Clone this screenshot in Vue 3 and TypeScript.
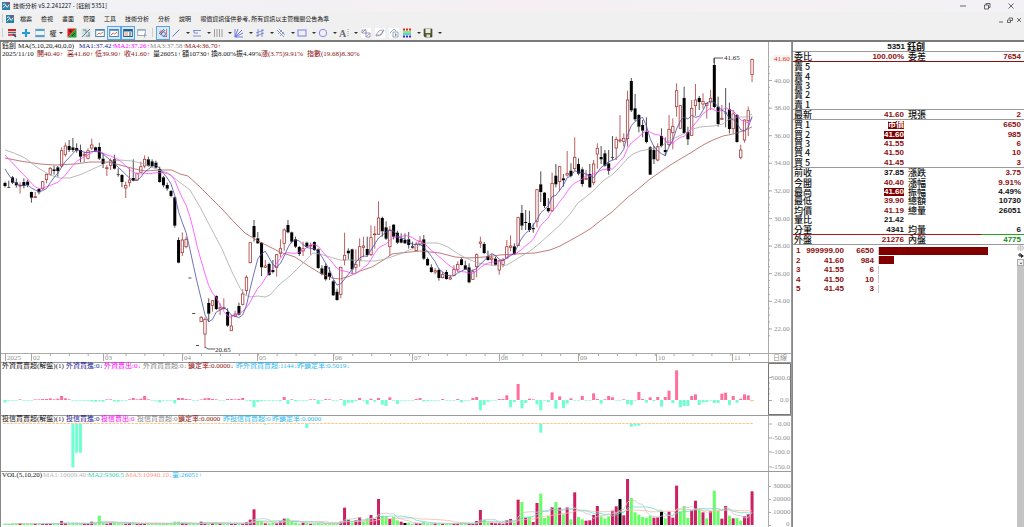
<script setup lang="ts">
type Kind = 'k' | 'r'
interface Candle { x: number; kind: Kind; high: number; top: number; bottom: number; low: number }

const STEP = 3.773
const FIRST = 5
const xAt = (i: number): number => FIRST + STEP * i

// each entry: kind, high, body top, body bottom, low, in thirds of a unit below the segment base
const segments: { base: number; rows: string }[] = [
  {
    base: 120,
    rows: `k 185 189 198 202,k 182 201 203 203,k 168 172 188 192,k 175 187 196 203,r 187 196 198 221,k 175 186 198 205,
k 179 185 195 202,k 215 216 233 248,r 216 230 233 233,k 205 207 217 223,r 183 185 206 210,r 161 163 179 190,
r 141 145 163 166,k 137 148 153 164,k 138 142 153 170,r 82 92 138 143,r 68 78 104 110,k 60 78 90 96,k 54 82 90 96,
k 70 84 92 98,k 74 90 110 127,r 95 103 106 126,r 85 92 115 118,r 56 75 84 90,k 80 82 94 95,k 68 81 116 120,
k 100 116 132 144,r 135 143 146 168,r 115 122 136 150,k 104 118 146 148,k 145 163 165 170,k 162 165 186 202,
r 185 196 204 234,r 145 180 188 200,k 118 174 182 184,r 158 160 180 182,r 125 140 157 158,r 106 118 138 145,
k 110 118 138 140,k 118 124 138 140,k 122 128 143 146,k 140 147 186 188,k 168 172 196 202,k 188 195 206 212,
k 210 213 228 232,k 230 232 317 323,k 352 360 428 430,r 337 360 398 408,r 350 358 380 385,k 473 473 475 475,
k 579 579 581 581,k 675 675 677 677,r 588 592 605 606,r 592 598 642 684,k 535 549 581 605,r 540 542 556 575,
k 526 528 567 570,r 550 563 567 585,r 535 563 566 568,k 565 576 617 620,r 585 618 632 633,r 572 582 588 592,
k 548 558 584 586,r 508 522 553 556,r 466 472 512 524,r 366 368 428 430,k 300 318 352 365`,
  },
  {
    base: 180,
    rows: `k 156 175 190 192,k 186 188 262 288,r 240 258 262 264,k 248 252 285 287,k 240 270 276 280,r 222 224 262 290,
r 178 206 220 232,r 145 150 190 212,k 120 135 157 160,k 155 157 185 190,k 170 178 200 204,k 198 201 222 228,
r 185 206 213 228,k 185 188 200 202,r 188 196 198 224,k 184 186 210 212,k 205 208 264 266,k 256 265 282 286,
k 250 258 298 302,k 262 278 291 300,k 300 304 346 348,k 326 335 360 362,r 260 262 343 355,r 158 226 240 256,
k 205 212 220 238,k 206 208 268 282,r 208 254 262 278,r 175 200 240 260,r 170 198 202 232,k 170 207 225 230,
r 136 173 224 228,r 138 162 164 206,r 64 114 163 165,k 110 114 154 170,k 124 142 176 180,r 138 150 200 228,
k 132 134 170 178,k 152 158 188 192,k 160 176 188 190,k 160 180 190 192,k 156 178 195 206,k 185 199 203 205,
r 185 192 212 213,r 168 184 192 194,k 165 178 236 240,k 232 237 256 258,k 253 262 276 278,r 264 272 276 283,
k 265 270 294 302,r 275 284 293 295,k 270 276 297 299,r 284 293 297 300,r 256 268 286 288,r 244 253 268 276,
k 234 238 255 256,k 242 256 268 270,k 250 262 307 310,r 268 275 298 300,r 220 224 260 292,r 170 186 190 204,
k 186 192 219 222,k 212 228 240 242,r 222 234 238 256,k 230 236 254 257,r 240 242 270 284,r 234 240 253 262`,
  },
  {
    base: 50,
    rows: `r 570 590 624 625,r 556 588 592 604,k 580 589 613 615,r 500 503 587 588,k 465 489 527 540,k 480 516 519 540,
k 482 519 540 546,k 520 534 538 548,r 417 419 514 532,k 364 403 426 456,k 426 428 468 474,k 444 474 484 488,
r 368 400 482 486,k 342 377 403 412,r 348 350 395 424,k 372 385 391 410,r 303 370 375 380,k 340 362 378 382,
r 262 322 356 362,k 325 342 371 376,k 352 358 402 410,r 360 385 388 390,k 342 372 412 414,r 330 342 398 405,
r 280 295 312 356,k 288 321 328 342,k 300 310 347 350,k 300 340 362 374,k 258 321 323 330,r 260 268 294 330,
r 195 270 273 278,r 250 265 274 290,r 122 150 266 290,k 84 93 181 186,k 132 175 208 214,k 192 195 230 247,
k 210 225 242 262,k 202 246 276 280,k 288 292 374 375,k 288 300 328 342,r 280 290 330 334,k 235 258 288 292,
k 262 300 306 318,r 195 238 284 290,r 205 229 248 298,r 100 122 170 200,r 165 167 235 237,k 110 144 249 252,
k 230 246 268 285,r 150 175 256 258,r 102 150 167 198,k 138 144 156 180,r 130 154 162 176,r 158 160 166 206,
r 120 145 156 180,k 24 45 171 175,k 140 170 222 230,r 165 205 208 210,k 114 188 190 232,k 158 178 237 250,
r 180 192 236 250,k 192 195 276 278,r 284 300 322 328,r 208 210 270 278,r 170 182 212 258,r 26 28 74 96`,
  },
]

const candles: Candle[] = segments
  .flatMap((s) => s.rows.split(',').map((row) => {
    const [kind, ...v] = row.trim().split(' ')
    const [high, top, bottom, low] = v.map((n) => s.base + Number(n) / 3)
    return { kind: kind as Kind, high, top, bottom, low }
  }))
  .map((c, i) => ({ ...c, x: xAt(i) }))

const average = (values: number[], n: number, seed: number[] = []): (number | null)[] =>
  values.map((_, i) => {
    if (i < n - 1) return seed[i] ?? null
    return values.slice(i - n + 1, i + 1).reduce((a, b) => a + b, 0) / n
  })
const polyline = (ys: (number | null)[]): string =>
  ys.map((y, i) => (y === null ? '' : `${xAt(i).toFixed(1)},${y.toFixed(1)}`)).filter(Boolean).join(' ')

const closes = candles.map((c) => (c.kind === 'k' ? c.bottom : c.top))
const ma5 = polyline(average(closes, 5, [169, 175, 180, 184]))
const ma10 = polyline(average(closes, 10, [155, 159, 163, 167, 171, 175, 179, 183, 187]))
const ma20 = '5,150 14,153 25,158 38,168 50,175 60,178 70,178 82,174 95,168 108,162 120,160 132,161 145,164 158,170 168,173 178,181 190,190 200,207 212,230 222,249 232,272 240,288 245,295 250,297 258,296 265,297 270,295 280,284 290,276 300,266 313,253 320,254 330,257 340,260 352,260 365,261 375,261 385,259 400,254 412,249 425,243 438,243 448,247 460,255 468,259 478,263 490,265 500,266 507,265 520,257 530,251 540,243 550,234 560,225 570,214 578,203 587,196 593,191 603,181 613,174 620,167 627,159 633,154 640,151 650,149 660,147 667,142 677,137 687,132 693,129 700,127 713,126 723,124 728,120 737,117 747,117 752,114'
const ma40 = '5,158 20,161 40,164 55,165 75,164 90,162 108,162 120,165 135,169 145,171 160,170 172,170 180,174 188,176 200,187 210,197 222,209 235,223 245,233 253,238 260,242 270,247 280,252 295,257 310,267 320,273 332,278 340,279 350,276 360,271 372,267 385,259 392,254 400,253 420,251 440,253 455,257 468,258 485,257 500,255 515,254 535,253 550,250 560,246 580,235 590,229 600,221 612,212 627,198 637,190 650,179 663,170 672,164 682,158 692,152 703,145 713,140 723,136 733,134 743,131 752,127'

const priceLabels = [40, 38, 36, 34, 32, 30, 28, 26, 24, 22].map((p) => ({ text: p.toFixed(2), y: 80.5 + (40 - p) * 13.8 }))
const minorTicks = Array.from({ length: 40 }, (_, i) => 66.7 + i * 6.9)
const months = [
  { t: '2025', x: 5 }, { t: '02', x: 31 }, { t: '03', x: 103 }, { t: '04', x: 182 }, { t: '05', x: 257 }, { t: '06', x: 333 },
  { t: '07', x: 412 }, { t: '08', x: 499 }, { t: '09', x: 578 }, { t: '10', x: 656 }, { t: '11', x: 732 },
]
const dayTicks = Array.from({ length: 39 }, (_, i) => 31.5 + i * 18.9)

const foreign = [
  -7, -2, -2, -1, 2, -2, -2, -2, 1, 1, 3, 3, 5, 2, 4, 12, 5, 2, -2, -2, -2, -2, -2, -4, -5, -3, -5, 1, 2, -4, -5, -2, -2, 2,
  6, 2, 4, 12, 2, -2, -2, -7, -2, -2, -2, -10, 6, 6, 3, 2, -2, -2, 1, 5, 6, 3, 1, -1, -1, 3, 3, 2, 3, 6, -2, -3, -22, -6,
  -3, -2, -2, -2, -2, -3, 9, -12, 2, -4, -1, -2, -2, 2, 1, -12, -2, 3, 2, -2, -2, 2, -17, -8, -8, -3, 6, -2, -13, 4, -5, 6, -14, -18,
  8, -2, -12, -1, -1, -1, -1, 3, 6, -4, -3, -2, -1, -1, 3, -1, -1, -2, 3, -7, -2, -1, 6, 9, -31, -15, -5, -1, -1, 3, 3, 14,
  -22, -6, 48, -25, -9, 4, 2, -13, -31, -2, -6, 23, -26, 11, -24, -11, 5, -1, -1, 12, -2, -1, 20, 3, -11, 2, 12, 8, -1, -2,
  2, -13, -15, -1, 24, 3, -8, 8, -3, 9, -20, 9, 28, -9, 89, -22, -18, -18, 12, 17, -15, -7, -6, -1, -9, -9, 19, 22, -15, 12,
  -8, 4, 17, 14,
].map((v, i) => ({ x: xAt(i), h: Math.max(Math.abs(v) / 3, 0.6), up: v > 0 }))

const trust = ([[18, 130], [19, 86], [20, 86], [69, 2], [80, 12], [142, 26], [166, 8], [167, 5], [168, 5]] as [number, number][])
  .map(([i, v]) => ({ x: xAt(i), h: v / 3 }))

const volumes = `4g 3g 5g 5g 6r 4g 4g 4g 4r 4g 4r 4r 5r 5g 4g 12r 6r 3g 5g 4g 4g 6r 4r 10r 7g 28g 6g 4r 6r 6g 5g 4g 4r 6r 4g 4r 4r 4r 3g 4g 4g 5g 4g 4g 5g 10g 10g 6r
4r 3g 3g 3g 10r 7r 7g 6r 8g 5r 4g 4g 4r 4r 4g 4r 9r 16r 47r 13g 11g 5r 5g 7g 5r 11r 19r 20g 9g 7g 4g 7r 6g 4r 4g 6g 4g 6g 4g 5g 4g
10r 52r 16r 8g 14r 23r 9g 20g 30r 18r 78r 27g 26g 18r 24g 14g 10r 6k 7g 4g 5r 5r 9g 4g 4g 5r 4g 5r 4g 4g 5r 5r 7g 5g 5r 4r 12r
45r 15g 7g 7r 5r 5r 4r 14r 18r 7g 76r 69g 22r 24g 9r 66r 94g 21g 27g 54r 69g 52r 32g 53r 17g 98r 24g 17g 13r 14r 30r 57r 26g
19g 26g 43r 56r 78k 29r 138r 81g 38g 31g 24g 22g 28g 22r 23r 40k 20g 40r 22r 118r 41g 57g 21g 44r 73r 46g 38r 20g 41r 103g
43g 19r 57r 28g 20r 21g 13g 26r 32r 101r`
  .split(/\s+/)
  .map((s, i) => ({ x: xAt(i), h: parseInt(s, 10) / 3, kind: s.slice(-1) }))
const BASE = 525
const volLevels = volumes.map((v) => BASE - v.h)
const vma5 = polyline(average(volLevels, 5, [524, 524, 524, 524]))
const vma10 = polyline(average(volLevels, 10))
const vma20 = polyline(average(volLevels, 20))

interface Field { text: string; arrow: string; tone: string }
const fields = (list: [string, string?][]): Field[] => list.map(([raw, tone = '']) => {
  const arrow = /[↑↓]$/.test(raw) ? raw.slice(-1) : ''
  return { text: arrow ? raw.slice(0, -1) : raw, arrow, tone }
})
const captions = {
  price: [
    { cls: 'c1', items: fields([['鈺創'], ['MA(5,10,20,40,0,0)'], ['MA1:37.42↑', 'navy'], ['MA2:37.26↑', 'pink'], ['MA3:37.58↑', 'grey'], ['MA4:36.70↑', 'red']]) },
    { cls: 'c2', items: fields([['2025/11/10'], ['開40.40↑', 'red'], ['高41.60↑', 'red'], ['低39.90↑', 'red'], ['收41.60↑', 'red'], ['量26051↑'], ['額10730↑'], ['換8.00%'], ['振4.49%'], ['漲(3.75)9.91%', 'red'], ['指數(19.68)8.30%', 'red']]) },
  ],
  foreign: [{ cls: 'c3', items: fields([['外資買賣超(解盤)(1)'], ['外資買進:0↓', 'navy'], ['外資賣出:0↓', 'pink'], ['外資買賣超:0↓', 'grey'], ['鎖定率:0.0000↓', 'red'], ['昨外資買賣超:1144↓', 'sky'], ['昨鎖定率:0.5019↓', 'sky']]) }],
  trust: [{ cls: 'c4', items: fields([['投信買賣超(解盤)(1)'], ['投信買進:0', 'navy'], ['投信賣出:0', 'pink'], ['投信買賣超:0', 'grey'], ['鎖定率:0.0000', 'red'], ['昨投信買賣超:0', 'sky'], ['昨鎖定率:0.0000', 'sky']]) }],
  volume: [{ cls: 'c5', items: fields([['VOL(5,10,20)'], ['MA1:10009.40↑', 'silver'], ['MA2:9306.5↓', 'mint'], ['MA3:10940.10↓', 'peach'], ['量:26051↑', 'sky']]) }],
}

const menus = ['檔案', '檢視', '畫面', '管理', '工具', '技術分析', '分析', '說明', '報價資訊僅供參考, 所有資訊以主管機關公告為準']

interface Tool { id: string; name: string; drop?: boolean; on?: boolean }
const tools: Tool[] = [
  { id: 'list', name: '清單' }, { id: 'plus', name: '新增' }, { id: 'window', name: '視窗' }, { id: 'right', name: '還原權值', drop: true },
  { id: 'redgreen', name: '紅綠' }, { id: 'grey', name: '灰階' }, { id: 'chart', name: '走勢' }, { id: 'chart', name: '圖表', on: true },
  { id: 'panel', name: '報價', on: true }, { id: 'add', name: '加入' }, { id: 'sep', name: '' }, { id: 'draw', name: '繪圖', on: true },
  { id: 'line', name: '直線', drop: true }, { id: 'level', name: '水平線', drop: true }, { id: 'vert', name: '垂直線', drop: true },
  { id: 'fan', name: '扇形', drop: true }, { id: 'channel', name: '通道', drop: true }, { id: 'pitch', name: '交叉線', drop: true },
  { id: 'rect', name: '矩形', drop: true }, { id: 'circle', name: '圓形', drop: true }, { id: 'text', name: '文字', drop: true },
  { id: 'move', name: '移動' }, { id: 'eraser', name: '橡皮擦' }, { id: 'copy', name: '複製' }, { id: 'colors', name: '顏色', drop: true },
  { id: 'save', name: '儲存', drop: true },
]

interface Quote { a: string; v?: string; b?: string; w?: string; vc?: string; wc?: string }
const sells: Quote[] = [5, 4, 3, 2, 1].map((n) => ({ a: `賣 ${n}` }))
const buys: Quote[] = [
  { a: '買 1', v: '市價', vc: 'limit', w: '6650', wc: 'up' },
  { a: '買 2', v: '41.60', vc: 'limit', w: '985', wc: 'up' },
  { a: '買 3', v: '41.55', vc: 'up', w: '6', wc: 'up' },
  { a: '買 4', v: '41.50', vc: 'up', w: '10', wc: 'up' },
  { a: '買 5', v: '41.45', vc: 'up', w: '3', wc: 'up' },
]
const stats: Quote[] = [
  { a: '前收', v: '37.85', b: '漲跌', w: '3.75', wc: 'up' },
  { a: '今開', v: '40.40', vc: 'up', b: '漲幅', w: '9.91%', wc: 'up' },
  { a: '最高', v: '41.60', vc: 'limit', b: '振幅', w: '4.49%' },
  { a: '最低', v: '39.90', vc: 'up', b: '總額', w: '10730' },
  { a: '均價', v: '41.19', vc: 'up', b: '總量', w: '26051' },
  { a: '量比', v: '21.42' },
  { a: '分筆', v: '4341', b: '均量', w: '6' },
]
const groups: { cls: string; rows: Quote[] }[] = [
  { cls: 'one ratio', rows: [{ a: '委比', v: '100.00%', vc: 'up', b: '委差', w: '7654', wc: 'up' }] },
  { cls: 'five', rows: sells },
  { cls: 'one', rows: [{ a: '最新', v: '41.60', vc: 'up', b: '現張', w: '2', wc: 'up' }] },
  { cls: 'five', rows: buys },
  { cls: 'seven', rows: stats },
  { cls: 'one', rows: [{ a: '外盤', v: '21276', vc: 'up', b: '內盤', w: '4775', wc: 'down' }] },
]
const orders = [
  { n: 1, p: '999999.00', q: 6650 }, { n: 2, p: '41.60', q: 984 }, { n: 3, p: '41.55', q: 6 },
  { n: 4, p: '41.50', q: 10 }, { n: 5, p: '41.45', q: 3 },
]
const barWidth = (q: number): string => `${Math.floor((q / 6650) * 79)}%`
</script>

<template>
  <div class="app">
    <header class="titlebar">
      <svg class="logo" viewBox="0 0 9 9"><rect width="9" height="9" fill="#2d7fa6" /><path d="M1 7 4 4 6 6 8 3M1 3 3 2 5 5" stroke="#fff" fill="none" /><path d="M5 1 8 0 8 3Z" fill="#d33" /></svg>
      <h1>技術分析 v5.2.241227 - [鈺創 5351]</h1>
      <div class="winctl">
        <button aria-label="最小化"><svg viewBox="0 0 8 8"><path d="M1 4H7" /></svg></button>
        <button aria-label="還原"><svg viewBox="0 0 8 8"><path d="M1.500 3H5.500V7H1.500ZM3 3V1.500H7V5.500H5.500" /></svg></button>
        <button aria-label="關閉"><svg viewBox="0 0 8 8"><path d="M1.500 1.500 6.500 6.500M6.500 1.500 1.500 6.500" /></svg></button>
      </div>
    </header>
    <nav class="menubar">
      <i class="grip"></i>
      <svg class="logo" viewBox="0 0 9 9"><rect width="9" height="9" fill="#2d7fa6" /><path d="M1 7 4 4 6 6 8 3M1 3 3 2 5 5" stroke="#fff" fill="none" /><path d="M5 1 8 0 8 3Z" fill="#d33" /></svg>
      <div class="menus"><button v-for="m in menus" :key="m">{{ m }}</button></div>
      <div class="childctl">
        <button aria-label="最小化子視窗"><svg viewBox="0 0 6 6"><path d="M1 5H5" stroke-width="1.300" /></svg></button>
        <button aria-label="還原子視窗"><svg viewBox="0 0 6 6"><path d="M.5 3H3.500V5.500H.5ZM2 2V1H5.500V3.500H4" /></svg></button>
        <button aria-label="關閉子視窗"><svg viewBox="0 0 6 6"><path d="M1 1 5 5M5 1 1 5" stroke="#999" /></svg></button>
      </div>
    </nav>
    <div class="toolbar" role="toolbar">
      <i class="grip"></i>
      <template v-for="(t, i) in tools" :key="i">
        <i v-if="t.id === 'sep'" class="grip sep"></i>
        <button v-else :class="{ on: t.on, drop: t.drop }" :aria-label="t.name">
          <span v-if="t.id === 'right'" class="glyph">權</span>
          <svg v-else class="icon" viewBox="0 0 10 10" fill="none">
            <template v-if="t.id === 'list'"><path d="M1 2H9" stroke="#d22" stroke-width="2" /><path d="M1 4.500H9" stroke="#567" stroke-width="1.500" /><path d="M1 7H9" stroke="#d22" stroke-width="1.500" /><path d="M6 6 9 9" stroke="#256" stroke-width="1.500" /></template>
            <path v-else-if="t.id === 'plus'" d="M5 1V9M1 5H9" stroke="#2a9ad6" stroke-width="2.200" />
            <template v-else-if="t.id === 'window'"><rect x=".5" y="1" width="9" height="8" fill="#eef4f8" stroke="#aac" stroke-width=".5" /><path d="M.5 2H9.500M.5 8H9.500" stroke="#5b9fc6" stroke-width="2" /></template>
            <template v-else-if="t.id === 'redgreen'"><path d="M.5.5H9.500L.5 9.500Z" fill="#e21b1b" /><path d="M9.500.5V9.500H.5Z" fill="#20a338" /><path d="M2 3H5M3.500 1.500V4.500M5 8 8 5" stroke="#222" stroke-width=".8" /></template>
            <template v-else-if="t.id === 'grey'"><rect x=".5" y=".5" width="9" height="9" fill="#d5e3e6" /><path d="M1 9 9 1M2 2H5V5M5 8H9M8 4V8" stroke="#688" /></template>
            <template v-else-if="t.id === 'chart'"><rect x=".7" y="1.500" width="8.600" height="7" fill="#fff" stroke="#4983b6" /><path d="M1 2H9" stroke="#4983b6" stroke-width="1.500" /><path d="M2 7 4 5 5.500 6 8 4" stroke="#e36b45" /></template>
            <template v-else-if="t.id === 'panel'"><rect x=".7" y="1.500" width="8.600" height="7" fill="#fff" stroke="#245f94" /><path d="M1 2.500H9" stroke="#245f94" stroke-width="2" /><path d="M2 5H5M2 7H5" stroke="#d85" /><path d="M6 5H8M6 7H8" stroke="#344" /></template>
            <template v-else-if="t.id === 'add'"><rect x=".7" y="1.500" width="7.600" height="6" fill="#fff" stroke="#9ab" /><path d="M1 2H8" stroke="#9ab" stroke-width="1.500" /><path d="M7.500 5.500V9.500M5.500 7.500H9.500" stroke="#9ab" /></template>
            <template v-else-if="t.id === 'draw'"><path d="M1 6 6 1M2 7 7 2" stroke="#6b6fa8" /><path d="M1 4H5M3 2V7" stroke="#d26a6a" stroke-width=".8" /><path d="M8.500 1V9M5 8.500H9" stroke="#c66" stroke-width=".9" /><circle cx="5.500" cy="6" r="2" stroke="#56a" stroke-width=".8" /></template>
            <path v-else-if="t.id === 'line'" d="M1.500 8.500 8.500 1.500" stroke="#6677cc" />
            <path v-else-if="t.id === 'level'" d="M1 2.500H9M1 8H9M2 2.500V5H6" stroke="#6677cc" stroke-width=".8" />
            <path v-else-if="t.id === 'vert'" d="M1.500 1V9M4 1V9M6.500 1V9M9 1V9" stroke="#888" stroke-width=".8" />
            <path v-else-if="t.id === 'fan'" d="M1 1V9H9M1 9 8 2M1 9 4 1M1 9 9 5" stroke="#6670e8" stroke-width=".9" />
            <path v-else-if="t.id === 'channel'" d="M1 5 9 2M1 8 9 5M3 1V9M7 1V9" stroke="#6677cc" stroke-width=".8" />
            <path v-else-if="t.id === 'pitch'" d="M1 2 8 9M3 1 9 7M2 6 6 2M4 8 8 4" stroke="#7788bb" stroke-width=".8" />
            <rect v-else-if="t.id === 'rect'" x="1" y="2" width="8" height="6" stroke="#7a7af0" />
            <circle v-else-if="t.id === 'circle'" cx="5" cy="5" r="3.700" stroke="#8a8af5" />
            <template v-else-if="t.id === 'text'"><text x="0" y="9" class="bigA">A</text><path d="M9 1V9" stroke="#888" stroke-width=".8" stroke-dasharray="1 1" /></template>
            <template v-else-if="t.id === 'move'"><rect width="10" height="10" fill="#fff" /><path d="M1 2H5V5H1ZM5 5H9V9H5Z" stroke="#7382b5" stroke-width=".8" /><path d="M1 5 5 1M5 9 9 5" stroke="#d88" stroke-width=".8" /></template>
            <template v-else-if="t.id === 'eraser'"><rect width="10" height="10" fill="#fff" /><path d="M1 7 4 3Q5 2 9 2L6 7Q5 8 1 8ZM1 7H5L8 3" stroke="#888fa8" stroke-width=".8" /></template>
            <template v-else-if="t.id === 'copy'"><rect width="10" height="10" fill="#fff" /><path d="M1 5 5 1 7 3M4 4H9V9H4Z" stroke="#7f8eae" stroke-width=".8" /><path d="M6 5V8L8 7Z" fill="#497" /></template>
            <template v-else-if="t.id === 'colors'"><path d="M1 1.500H9" stroke="#e22" stroke-width="2" stroke-dasharray="2 1" /><path d="M1 4H9" stroke="#6e4" stroke-width="1.500" /><path d="M1 6H9" stroke="#2cc" stroke-width="1.500" /><path d="M1 8.500H9" stroke="#42e" stroke-width="2" stroke-dasharray="2 1" /></template>
            <template v-else-if="t.id === 'save'"><path d="M1 1H9V9H2L1 8Z" fill="#556028" stroke="#333" stroke-width=".6" /><rect x="2.500" y="1" width="5" height="4" fill="#e9ebe0" /><rect x="3.500" y="6.500" width="3.500" height="2.500" fill="#ddd" /></template>
          </svg>
          <i v-if="t.drop" class="arrow"></i>
        </button>
      </template>
    </div>

    <main class="work">
      <section class="charts">
        <div class="pane">
          <svg class="plot" viewBox="1 42 790 320">
            <g class="axis">
              <path d="M768.500 42V362M0 353.500H791" />
              <path v-for="p in priceLabels" :key="p.text" :d="`M768 ${p.y}H772`" />
              <path v-for="y in minorTicks" :key="y" :d="`M768 ${y}H770`" />
              <path v-for="m in months" :key="m.t" :d="`M${m.x + .5} 353V361`" />
              <path v-for="x in dayTicks" :key="x" :d="`M${x} 353V356`" />
            </g>
            <text v-for="p in priceLabels" :key="p.text" class="num" x="774" :y="p.y + 2">{{ p.text }}</text>
            <path d="M770 59 774 55H790V62H774Z" fill="#edf5ee" />
            <text class="num now" x="774" y="61">41.60</text>
            <text v-for="m in months" :key="m.t" class="num" :x="m.x + 2" y="360">{{ m.t }}</text>
            <text class="num" x="773" y="360">日線</text>
            <g v-for="c in candles" :key="c.x" :class="c.kind">
              <path :d="`M${c.x} ${c.high}V${c.top}M${c.x} ${c.bottom}V${c.low}`" />
              <rect :x="c.x - (c.kind === 'k' ? 1.5 : 1.2)" :y="c.top" :width="c.kind === 'k' ? 3 : 2.4" :height="Math.max(c.bottom - c.top, 0.7)" />
            </g>
            <polyline :points="ma40" stroke="#b05c5c" />
            <polyline :points="ma20" stroke="#aaaaaa" />
            <polyline :points="ma10" stroke="#ff44ff" />
            <polyline :points="ma5" stroke="#4d4da8" />
            <path class="lead" d="M714 63V58H723M205 347 208 349H215" />
            <text class="num dark" x="724" y="60">41.65</text>
            <text class="num dark" x="215" y="352">20.65</text>
          </svg>
          <div class="captions">
            <p v-for="c in captions.price" :key="c.cls" class="cap" :class="c.cls"><span v-for="f in c.items" :key="f.text" :class="f.tone">{{ f.text }}<em v-if="f.arrow">{{ f.arrow }}</em></span></p>
          </div>
        </div>
        <div class="pane split">
          <svg class="plot" viewBox="1 363 790 52">
            <g class="axis"><path d="M768.500 363V415M768 377.500H772M768 400.500H772M768 389H770M768 383H770M768 394H770" /></g>
            <path d="M768.500 363.500H790.500V414.500H768.500Z" stroke="#777" fill="none" />
            <text class="num" x="771" y="380">5000.0</text>
            <text class="num" x="780" y="402">0.0</text>
            <rect v-for="b in foreign" :key="b.x" :x="b.x - 1.5" :y="b.up ? 400 - b.h : 400" width="3" :height="b.h" :fill="b.up ? '#ff6f9c' : '#6fffd0'" />
            <path d="M750 400.500H754" stroke="#ffc88a" />
          </svg>
          <div class="captions">
            <p v-for="c in captions.foreign" :key="c.cls" class="cap" :class="c.cls"><span v-for="f in c.items" :key="f.text" :class="f.tone">{{ f.text }}<em v-if="f.arrow">{{ f.arrow }}</em></span></p>
          </div>
        </div>
        <div class="pane split">
          <svg class="plot" viewBox="1 416 790 55">
            <g class="axis"><path d="M768.500 416V471M768 424H772M768 438H772M768 452H772M768 467H772" /></g>
            <text class="num" x="778" y="426">0.00</text><text class="num" x="772" y="440">-50.00</text>
            <text class="num" x="772" y="454">-100.0</text><text class="num" x="772" y="469">-150.0</text>
            <path d="M3 423.500H753" stroke="#ffc88a" stroke-dasharray="2.800 .973" />
            <rect v-for="b in trust" :key="b.x" :x="b.x - 1.5" y="424" width="3" :height="b.h" fill="#6fffd0" />
          </svg>
          <div class="captions">
            <p v-for="c in captions.trust" :key="c.cls" class="cap" :class="c.cls"><span v-for="f in c.items" :key="f.text" :class="f.tone">{{ f.text }}<em v-if="f.arrow">{{ f.arrow }}</em></span></p>
          </div>
        </div>
        <div class="pane split">
          <svg class="plot" viewBox="1 472 790 55">
            <g class="axis"><path d="M768.500 472V527M768 486.500H771M768 499.500H771M768 512.500H771M768 525.500H771" /></g>
            <text class="num" x="773" y="488">30000</text><text class="num" x="773" y="501">20000</text>
            <text class="num" x="773" y="514">10000</text><text class="num" x="786" y="526">0</text>
            <rect v-for="b in volumes" :key="b.x" :x="b.x - 1.5" :y="BASE - b.h" width="3" :height="b.h" :class="'v' + b.kind" />
            <polyline :points="vma20" stroke="#ffb8a8" />
            <polyline :points="vma10" stroke="#66e0cc" />
            <polyline :points="vma5" stroke="#c8c8c8" />
          </svg>
          <div class="captions">
            <p v-for="c in captions.volume" :key="c.cls" class="cap" :class="c.cls"><span v-for="f in c.items" :key="f.text" :class="f.tone">{{ f.text }}<em v-if="f.arrow">{{ f.arrow }}</em></span></p>
          </div>
        </div>
      </section>

      <aside class="side">
        <h2><span>5351</span> 鈺創</h2>
        <table>
          <tbody v-for="(g, gi) in groups" :key="gi" :class="g.cls">
            <tr v-for="r in g.rows" :key="r.a">
              <th>{{ r.a }}</th>
              <td><span :class="r.vc">{{ r.v }}</span></td>
              <th>{{ r.b }}</th>
              <td><span :class="r.wc">{{ r.w }}</span></td>
            </tr>
            <tr v-if="g.cls === 'seven'" class="meter"><td colspan="4"></td></tr>
          </tbody>
        </table>
        <div class="book">
          <ol>
            <li v-for="o in orders" :key="o.n">
              <span>{{ o.n }}</span><span>{{ o.p }}</span><span>{{ o.q }}</span>
              <i class="track"><i class="fill" :style="{ width: barWidth(o.q) }"></i></i>
            </li>
          </ol>
          <div class="scroll">
            <svg viewBox="0 0 7 14"><path d="M3.500 0V6M0 3H7M1 1H6V5H1Z" stroke="#aaa" stroke-width=".6" fill="none" /><path d="M1 10H5M3 8V12" stroke="#222" /><path d="M4 9 7 11 4 13Z" fill="#222" /></svg>
            <button aria-label="向上捲動"></button>
          </div>
        </div>
      </aside>
    </main>
  </div>
</template>

<style>
body { background: #fff; }
</style>

<style scoped>
.app { min-height: 100vh; color: #111; font: 6px/8px "Noto Sans CJK TC", sans-serif; overflow: hidden; }
* { box-sizing: border-box; }
button { border: 0; padding: 0; background: none; font: inherit; color: inherit; display: flex; align-items: center; justify-content: center; }
h1, h2, p, ol { margin: 0; padding: 0; }
i { display: block; }
.titlebar { display: flex; align-items: center; height: 12px; padding: 0 24px 0 2px; gap: 3px; background: linear-gradient(90deg, #f0f2f7, #f5eff3 50%, #f3f1f5); }
h1 { font: 400 6px/10px "Noto Sans CJK TC", sans-serif; flex: 1; }
.logo { width: 8px; height: 8px; flex: none; }
.winctl { display: flex; gap: 16px; margin-right: -15px; }
.winctl svg { width: 8px; height: 8px; }
.winctl path, .childctl path { fill: none; stroke: #444; stroke-width: 0.8; }
.menubar { display: flex; align-items: center; height: 13px; padding: 0 2px; background: #f0f0f0; }
.menubar .logo { margin: 0 6px 0 3px; }
.grip { width: 1px; height: 9px; background: #ccc; flex: none; }
.menus { display: flex; gap: 9px; flex: 1; }
.menus button { white-space: nowrap; }
.childctl { display: flex; gap: 3px; padding-top: 2px; }
.childctl svg { width: 6px; height: 6px; }
.toolbar { display: flex; align-items: center; height: 15px; padding: 0 2px; background: #f0f0f0; }
.toolbar .grip { margin-right: 2px; }
.toolbar .sep { margin: 0 3px; }
.toolbar button { width: 14px; height: 14px; border: 1px solid transparent; flex: none; }
.toolbar .on { background: #d5e8f8; border-color: #5aa5df; }
.toolbar .drop { width: 21px; gap: 5px; }
.toolbar .drop:nth-of-type(4) { width: 18px; gap: 2px; }
.icon { width: 10px; height: 10px; flex: none; }
.glyph { font-size: 7px; }
.arrow { border: 2px solid transparent; border-top: 2px solid #333; border-bottom: 0; width: 0; height: 0; }
.bigA { font: bold 10px "Liberation Serif", serif; fill: #667; }
.work { display: grid; grid-template-columns: minmax(0, 792fr) minmax(0, 232fr); border-top: 2px solid #7b7b7b; min-height: 487px; }
.charts { border-left: 2px solid #888; margin-left: -1px; border-right: 1px solid #999; }
.pane { display: grid; }
.pane > * { grid-area: 1 / 1; }
.split { border-top: 1px solid #999; }
.plot { width: 100%; height: auto; display: block; }
.captions { display: grid; align-content: start; z-index: 1; padding-left: 1px; }
.cap { display: grid; justify-content: start; font: 7px/8px "Liberation Serif", "Noto Sans CJK TC", serif; white-space: nowrap; }
.cap em { font: 400 6px/6px "Liberation Mono", monospace; }
.c1 { grid-template-columns: 16px 61px 35px 36px 35px 40px; }
.c2 { grid-template-columns: 35px 30px 28px 29px 29px 29px 29px 25px 25px 46px 60px; }
.c3 { grid-template-columns: 64px 38px 39px 45px 48px 61px 60px; line-height: 7px; }
.c4 { grid-template-columns: 64px 35px 36px 41px 45px 49px 60px; line-height: 7px; }
.c5 { grid-template-columns: 41px 45px 38px 46px 40px; line-height: 7px; }
.navy { color: #181890; }
.pink { color: #ff00ff; }
.grey { color: #888; }
.red { color: #8b1010; }
.sky { color: #28b8f0; }
.silver { color: #b8b8b8; }
.mint { color: #30d8b0; }
.peach { color: #ff9a88; }
.axis path { stroke: #aaa; fill: none; }
.num { font: 7px "Liberation Serif", "Noto Sans CJK TC", serif; fill: #909090; }
.num.now { fill: #ff2020; }
.num.dark { fill: #222; }
.lead { fill: none; stroke: #333; stroke-width: 0.8; }
polyline { fill: none; stroke-width: 0.8; }
.k path { stroke: #222; stroke-width: 0.8; }
.k rect { fill: #000; }
.r path { stroke: #a83a3a; stroke-width: 0.8; }
.r rect { fill: #fff; stroke: #a83a3a; stroke-width: 0.8; }
.vr { fill: #cc2062; }
.vg { fill: #66ff66; }
.vk { fill: #000; }
.side { border-left: 1px solid #888; font: bold 8px/9px "Liberation Sans", "Noto Sans CJK TC", sans-serif; }
h2 { display: grid; grid-template-columns: 112px 1fr; column-gap: 2px; height: 9px; font: bold 9px/9px "Noto Sans CJK TC", sans-serif; }
h2 span { text-align: right; font: bold 8px/9px "Liberation Sans", sans-serif; }
table { width: 100%; border-collapse: collapse; display: block; }
tbody { display: grid; border-top: 1px solid #999; grid-auto-rows: minmax(0, 1fr); }
tr { display: grid; grid-template-columns: 60px 50px 51px 1fr; padding-right: 3px; align-items: center; padding-left: 1px; }
th { padding: 0; text-align: left; font: 500 9px/9px "Noto Sans CJK TC", sans-serif; white-space: nowrap; }
th:nth-child(3) { padding-left: 4px; }
td { padding: 0; text-align: right; }
td span { display: inline-block; line-height: 8px; }
.one { height: 10px; }
.five { height: 48px; }
.seven { height: 68px; grid-template-rows: repeat(7, minmax(0, 1fr)) 1px; }
.ratio + .five { border-top: 1px solid #8b1010; }
.meter { display: block; padding: 0; height: 1px; background: linear-gradient(90deg, #b01818 82%, #20a820 82%); }
.seven + .one { border-top: 0; border-bottom: 1px solid #999; }
.up { color: #8b1010; }
.down { color: #109010; }
.limit { background: #800000; color: #fff; }
.book { display: grid; grid-template-columns: 1fr 7px; min-height: 284px; color: #8b1010; }
ol { list-style: none; padding-top: 1px; }
li { display: grid; grid-template-columns: 8px 40px 30px 1fr; height: 10px; align-items: center; text-align: right; padding-left: 3px; }
li:nth-child(odd) { height: 9px; }
li span:first-child { text-align: left; }
.track { margin-left: 4px; height: 8px; border-left: 1px solid #ccc; }
.fill { height: 8px; background: #800000; }
.scroll { display: flex; flex-direction: column; }
.scroll::after { content: ""; flex: 1; background: #c4c4c4; }
.scroll button { height: 7px; background: #eee; border: 1px solid #aaa; }
.scroll button::before { content: ""; border: 1px solid transparent; border-bottom: 2px solid #555; }
</style>
